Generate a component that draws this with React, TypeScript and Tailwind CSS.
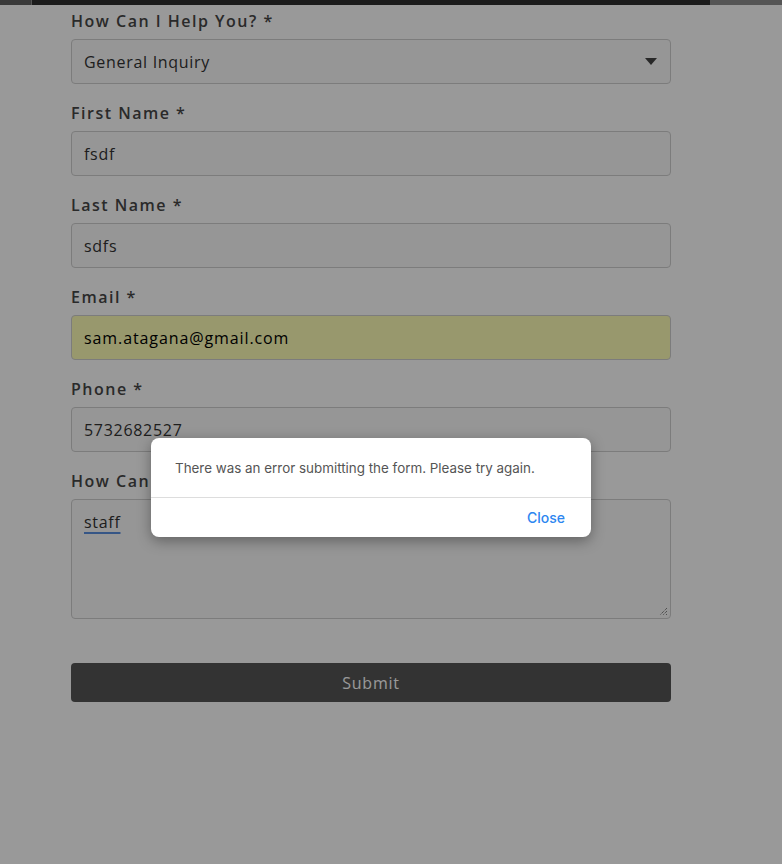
import React from "react";

const font = { fontFamily: "'Open Sans', 'Noto Sans', sans-serif" };

function Field({ label, children }: { label: string; children: React.ReactNode }) {
  return (
    <div className="flex flex-col gap-2">
      <label className="text-[16px] leading-[20px] font-semibold text-[#474747] tracking-[1.5px]">{label}</label>
      {children}
    </div>
  );
}

const inputCls =
  "h-[45px] w-full rounded-[4px] border border-[#cfcfcf] bg-[#fafafa] px-3 text-[16px] text-[#333] tracking-[0.7px] outline-none";

export default function App() {
  return (
    <div className="relative min-h-[864px] w-[782px] bg-white" style={font}>
      {/* top strip */}
      <div className="flex h-[5px]">
        <div className="w-[31px] bg-[#3a3a3a]" />
        <div className="w-px bg-[#555]" />
        <div className="flex-1 bg-[#1c1c1c]" />
        <div className="w-[72px] bg-[#555]" />
      </div>

      <form className="ml-[71px] flex w-[600px] flex-col gap-[19px] pt-[6px]">
        <Field label="How Can I Help You? *">
          <div className={`${inputCls} flex items-center justify-between`}>
            <span>General Inquiry</span>
            <svg width="12" height="7" viewBox="0 0 12 7" className="mr-[1px]">
              <path d="M0 0h12L6 7z" fill="#444" />
            </svg>
          </div>
        </Field>
        <Field label="First Name *">
          <input className={inputCls} defaultValue="fsdf" />
        </Field>
        <Field label="Last Name *">
          <input className={inputCls} defaultValue="sdfs" />
        </Field>
        <Field label="Email *">
          <input className={`${inputCls} bg-[#fdfdb6] text-black tracking-[0.9px]`} defaultValue="sam.atagana@gmail.com" />
        </Field>
        <Field label="Phone *">
          <input className={inputCls} defaultValue="5732682527" />
        </Field>
        <Field label="How Can I Help You? *">
          <div className="relative h-[120px] w-full rounded-[4px] border border-[#cfcfcf] bg-[#fafafa]">
            <span className="absolute left-3 top-[10px] text-[16px] tracking-[0.7px] text-[#333] underline decoration-[#5b8fe0] decoration-2 underline-offset-4">
              staff
            </span>
            <svg width="9" height="9" viewBox="0 0 9 9" className="absolute bottom-[2px] right-[2px]">
              <path d="M8 1L1 8M8 4L4 8M8 7L7 8" stroke="#555" strokeWidth="1" strokeDasharray="1 1" />
            </svg>
          </div>
        </Field>
        <button
          type="button"
          className="mt-[25px] h-[39px] w-full rounded-[4px] bg-[#555] text-[16px] font-medium tracking-[0.8px] text-white"
        >
          Submit
        </button>
      </form>

      {/* overlay */}
      <div className="absolute inset-0 top-[5px] bg-black/40" />

      {/* dialog */}
      <div
        className="absolute left-[151px] top-[438px] w-[440px] rounded-[8px] bg-white shadow-[0_4px_14px_rgba(0,0,0,0.35)]"
        style={{ fontFamily: "Inter, 'Liberation Sans', sans-serif" }}
      >
        <div className="px-6 pb-[20px] pt-[21px] text-[13.4px] leading-[18px] text-[#555]">
          There was an error submitting the form. Please try again.
        </div>
        <div className="h-px bg-[#ddd]" />
        <div className="flex h-[39px] items-center justify-end px-[26px]">
          <span className="text-[14px] font-medium text-[#2d86f0]">Close</span>
        </div>
      </div>
    </div>
  );
}
